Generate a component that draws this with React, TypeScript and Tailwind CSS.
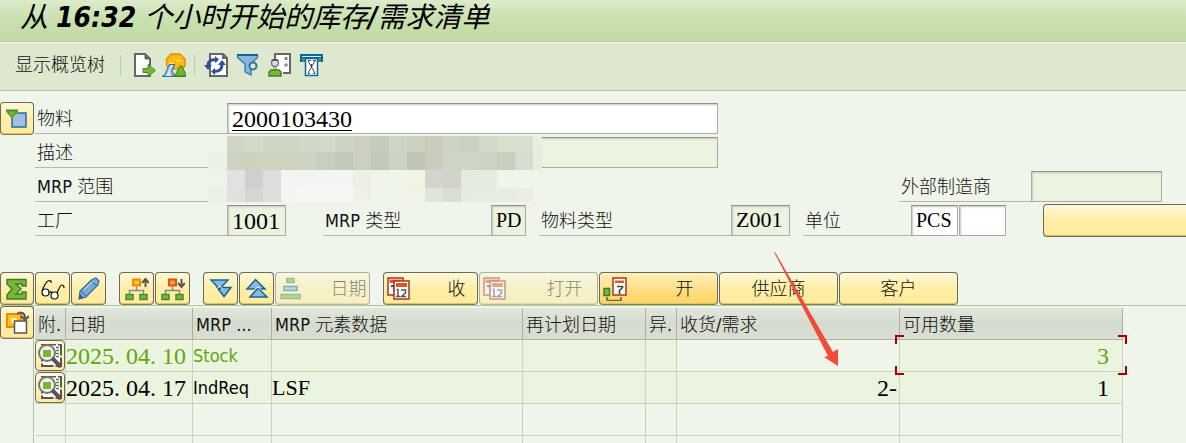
import type { ReactNode } from "react";

const SANS = "font-['DejaVu_Sans_Condensed','Noto_Sans_CJK_SC',sans-serif]";
const SERIF = "font-['Liberation_Serif','Noto_Sans_CJK_SC',serif]";

type IconProps = { children: ReactNode };

function Icon({ children }: IconProps) {
  return (
    <svg viewBox="0 0 24 24" className="size-6 shrink-0" aria-hidden="true">
      {children}
    </svg>
  );
}

const ExportPage = () => (
  <Icon>
    <path d="M2 1H12l5 5v17H2z" fill="#fff" stroke="#666" strokeWidth="2" />
    <path d="M12 1v5h5z" fill="#666" stroke="#666" />
    <path d="M10 15.500h5v-4l7.500 6L15 23.500v-4h-5z" fill="#7cb82f" stroke="#3f8a2c" />
  </Icon>
);

const Landscape = () => (
  <Icon>
    <path d="M4.500 12V6l4.500-5h9l5 5v7l-3 3H8z" fill="#fdbb12" stroke="#f08a00" strokeWidth="1.500" />
    <path d="M6 12c1-2 4-3 6-1M14 8c1-1 4-1 6 1" fill="none" stroke="#fff2b0" />
    <path d="M0 23.500l3-2 4-10h6l-3 6 3 6z" fill="#8fb4dc" stroke="#2d6da0" />
    <path d="M4 23l5-11h2l-3 6 1 5z" fill="#d8e8f5" />
    <path d="M12 24l6-11h2l4 9v2z" fill="#6fb52c" stroke="#3f7d3c" />
    <path d="M10 22.500h14V24H10z" fill="#3f7d3c" />
  </Icon>
);

const Refresh = () => (
  <Icon>
    <path d="M6 1h13l4 4v18H6z" fill="#fff" stroke="#666" strokeWidth="2" />
    <path d="M18 1v5h5z" fill="#666" />
    <path d="M4 13c0-5 3-7 9-6" fill="none" stroke="#2f4f9f" strokeWidth="3" />
    <path d="M0 12h8l-4 5z" fill="#2f4f9f" />
    <path d="M18 11c0 6-3 8-9 7" fill="none" stroke="#2f4f9f" strokeWidth="3" />
    <path d="M14 12h8l-4-5zM11 3v7l4-3.500zM11 15v7l-4-3.500z" fill="#2f4f9f" />
  </Icon>
);

const Filter = () => (
  <Icon>
    <path d="M1.500 1.500h20v3L15 11v11l-6-3v-8L1.500 4.500z" fill="#8fb4d8" stroke="#1f75a8" strokeWidth="1.200" />
    <path d="M1 1h21v2H1z" fill="#006a9e" />
    <circle cx="17" cy="13" r="3.500" fill="#dfe8d0" stroke="#2b78aa" strokeWidth="2" />
  </Icon>
);

const PersonCard = () => (
  <Icon>
    <path d="M7 1h15v19H7z" fill="#fff" />
    <path d="M7 7V1h15v19h-7" fill="none" stroke="#666" strokeWidth="2" />
    <path d="M17 4.500h2v2h-2zM17 11h2v2h-2z" fill="none" stroke="#666" />
    <circle cx="7" cy="10" r="3.500" fill="#ddd" stroke="#777" strokeWidth="1.500" />
    <path d="M3 8c1-3 7-3 8 0z" fill="#555" />
    <path d="M5 14h4v4H5z" fill="#bbb" />
    <path d="M1 23v-4l2-2h8l2 2v4z" fill="#7cb82f" stroke="#3f7d3c" strokeWidth="1.500" />
  </Icon>
);

const Hourglass = () => (
  <Icon>
    <path d="M0 1h23v8H0z" fill="#006a9e" />
    <path d="M2 3h19v1H2z" fill="#dfeaf2" />
    <path d="M2 5h4v4H2zM17 5h4v4h-4z" fill="#777" />
    <path d="M5.500 5.500h12v17h-12z" fill="#fff" stroke="#006a9e" strokeWidth="1.500" />
    <path d="M8 8l7 12M15 8L8 20M8 7.500h3M13 7.500h3M8 20.500h2M13 20.500h2M11.500 11v4" stroke="#333" strokeWidth="0.900" fill="none" />
  </Icon>
);

const HeaderToggle = () => (
  <Icon>
    <path d="M7 6h14v14H7z" fill="#a3bfdd" stroke="#1a6fa3" strokeWidth="1.500" />
    <path d="M1 3h12v2l-5 6H6L1 5z" fill="#7cb82f" />
    <path d="M1 2.500h12v2H1z" fill="#3f8a3c" />
    <path d="M3 5l4 5 4-5" fill="none" stroke="#3f8a3c" />
  </Icon>
);

const Sigma = () => (
  <Icon>
    <path d="M2 2.500h19V9h-4V7h-6l5 5-5 5h6v-2h4v7H2v-4l5-6-5-5z" fill="#7cb82f" stroke="#3a7d3a" strokeWidth="1.500" />
  </Icon>
);

const Glasses = () => (
  <Icon>
    <g fill="none" stroke="#111" strokeWidth="1.200">
      <circle cx="4.500" cy="15.500" r="3.500" fill="#fff" />
      <circle cx="13.500" cy="18.500" r="3.500" fill="#fff" />
      <path d="M8 16c1-2 3-1 3 0M1 14C3 9 5 5 7 4s4 0 3 2M16 16c2-4 3-8 5-8s2 1 2 3" />
    </g>
  </Icon>
);

const Pencil = () => (
  <Icon>
    <path d="M2 22l1-8L15 2.500l4-1.500 3 3-1 4L9 20z" fill="#7aa9d8" stroke="#2f6f9f" strokeWidth="1.200" />
    <path d="M14 4l6 5M4 14l5 5" stroke="#2f6f9f" fill="none" />
    <path d="M7 13L16 4" stroke="#d5e5f4" fill="none" />
    <path d="M2 22l1-5 4 4z" fill="#2f5f8f" />
  </Icon>
);

const Tree = ({ down = false }: { down?: boolean }) => (
  <Icon>
    <path d="M8 2.500h7v6H8z" fill={down ? "#fa9f2a" : "#fdc22b"} stroke={down ? "#d9531e" : "#f08a00"} strokeWidth="2" />
    <path d="M11.500 9.500V13M4.500 17v-3.500h14V17" fill="none" stroke="#888" strokeWidth="1.500" />
    <path d="M1 17.500h7v5H1zM15 17.500h7v5h-7z" fill="#7cb82f" stroke="#3f8a3c" strokeWidth="1.500" />
    {down ? (
      <path d="M20.500 2v7M17 6l3.500 4L24 6" fill="none" stroke="#555" strokeWidth="2" />
    ) : (
      <path d="M20.500 10V3M17 6l3.500-4L24 6" fill="none" stroke="#555" strokeWidth="2" />
    )}
  </Icon>
);

const DoubleDown = () => (
  <Icon>
    <path d="M8 10.500h14l-7 9z" fill="#8fb8e0" stroke="#0f679c" strokeWidth="1.500" />
    <path d="M2 3h17l-8.500 9z" fill="#8fb8e0" stroke="#0f679c" strokeWidth="1.500" />
    <path d="M7 12l4-3 3 3" stroke="#fff" fill="none" />
  </Icon>
);

const DoubleUp = () => (
  <Icon>
    <path d="M2 12l8.500-9.500L20 12z" fill="#8fb8e0" stroke="#0f679c" strokeWidth="1.500" />
    <path d="M5 20l8-9 9 9z" fill="#8fb8e0" stroke="#0f679c" strokeWidth="1.500" />
    <path d="M9 13l4-3 3 3" stroke="#fff" fill="none" />
  </Icon>
);

const Stack = () => (
  <Icon>
    <path d="M8 1.500h7v4H8zM2 17.500h19v4H2z" fill="#7cb82f" stroke="#3f8a3c" strokeWidth="1.500" />
    <path d="M5 9.500h13v4H5z" fill="#8fb8e0" stroke="#0f679c" strokeWidth="1.500" />
  </Icon>
);

const Calendars = () => (
  <Icon>
    <path d="M1 1h15v17H1z" fill="#fff" stroke="#b03020" strokeWidth="1.500" />
    <path d="M2.500 2.500h12V6h-12z" fill="#e0561c" />
    <path d="M4 9h3v6" fill="none" stroke="#444" strokeWidth="2" />
    <path d="M7 4h15v18H7z" fill="#fff" stroke="#b03020" strokeWidth="1.500" />
    <path d="M9 6h11v4H9z" fill="#e0561c" />
    <path d="M9.500 12.500H11V19M9 19.500h4M14 13h4.500v3L14.500 19.500H19" fill="none" stroke="#555" strokeWidth="1.500" />
  </Icon>
);

const CalendarLink = () => (
  <Icon>
    <path d="M10 1h13v17H10z" fill="#fff" stroke="#b03020" strokeWidth="1.500" />
    <path d="M12 3.500h9V6h-9z" fill="#e0561c" />
    <path d="M14 9.500h5.500v1l-3 3V17" fill="none" stroke="#444" strokeWidth="1.700" />
    <path d="M1 11.500h5.500v7H1z" fill="#7cb82f" stroke="#3f7d3c" strokeWidth="1.500" />
    <path d="M4 20v3.500h14V20" fill="none" stroke="#666" strokeWidth="1.700" />
  </Icon>
);

const CopyArrow = () => (
  <Icon>
    <path d="M2 3h14v13H2z" fill="#fdc22b" stroke="#f08a00" strokeWidth="2" />
    <path d="M6.500 7h5v5h-5z" fill="#fff4c0" />
    <path d="M9.500 10h12v12h-12z" fill="#fff" stroke="#555" strokeWidth="1.500" />
    <path d="M12 3c4-3 8-1 8 4M16 5l4 4 4-4" fill="none" stroke="#555" strokeWidth="2" />
  </Icon>
);

const Details = () => (
  <Icon>
    <path d="M4 0.500h19V22H4z" fill="#fff" stroke="#555" strokeWidth="2" strokeDasharray="14 2" />
    <path d="M18 3.500h3M18 6.500h3M18 9.500h3M18 12.500h3" stroke="#3f8a3c" strokeWidth="1.500" />
    <circle cx="9" cy="9" r="8" fill="#eef2ea" stroke="#777" strokeWidth="2" />
    <path d="M5 6h8v7H5z" fill="#7cb82f" />
    <path d="M14 14l9 9" stroke="#555" strokeWidth="4" />
  </Icon>
);

type ButtonProps = {
  label: string;
  icon?: ReactNode;
  text?: string;
  className: string;
  disabled?: boolean;
  active?: boolean;
};

function YellowButton({ label, icon, text, className, disabled, active }: ButtonProps) {
  const fill = active
    ? "bg-linear-to-b from-[#fff0b8] via-[#ffe08a] to-[#ffd55c]"
    : "bg-linear-to-b from-[#fff8d8] via-[#ffeea6] to-[#ffeb9c]";
  return (
    <button
      type="button"
      aria-label={label}
      disabled={disabled}
      className={`flex h-[33px] shrink-0 items-center justify-center rounded-sm border border-[#6a6a5c] border-b-[#8a7c4c] whitespace-nowrap shadow-[inset_0_-1px_0_#d9c272] disabled:opacity-50 ${fill} ${className}`}
    >
      {icon}
      {text && <span className={icon ? "flex-1 pl-7 text-center" : ""}>{text}</span>}
    </button>
  );
}

function Label({ id, className, children }: { id: string; className: string; children: ReactNode }) {
  return (
    <label
      htmlFor={id}
      className={`flex h-[31px] shrink-0 items-center border-b border-[#b2b8ac] pt-0.5 pl-0.5 whitespace-nowrap ${className}`}
    >
      {children}
    </label>
  );
}

function Field({ id, value = "", className, label }: { id: string; value?: string; className: string; label?: string }) {
  return (
    <input
      id={id}
      aria-label={label}
      defaultValue={value}
      className={`h-[31px] shrink-0 border border-[#a9ada5] border-t-[#8f948b] px-1 text-black shadow-[inset_1px_1px_2px_#c4c9be] outline-none ${SERIF} ${className}`}
    />
  );
}

const READONLY = "bg-[#eaf4df]";

const MASK: string[][] = [
  ["", "#cfd6c4", "#d2dac8", "#cdd6c4", "#cfd6c4", "#d0d8c8", "#d2dacb", "#ccd4c2", "#cdd0be", "#c3ccba", "#ced6c6", "#cad2c0", "#c9ccb8", "#cdd4c6", "#c9d0be", "#d0d9ca", "#d8dfca", "#d8dfcf", "#e6eedc"],
  ["#ebf1e7", "#cdd4c1", "#cbd3bf", "#cdd4bf", "#ccd3bf", "#ccd4c4", "#c7cfbf", "#c1c9b9", "#cad0be", "#c2c9b9", "#ccd4c4", "#bfc4b8", "#c8cebb", "#cdd6c5", "#cfd7c4", "#ccd3c3", "#c8cfbd", "#d6dfcf", "#e6eedc"],
  ["#eef3ea", "#e1e1e0", "#cfcfcf", "#dddddd", "#f4f4f2", "#f4f4f3", "#f4f4f3", "#f4f4f3", "#ecf0e6", "", "", "#f0f5e4", "#d1d5cd", "#d1d3ca", "#e5ebe0", "#e4eae0", "", "", ""],
  ["#eaf0e6", "#e0e0df", "#d5d5d3", "#dedddb", "#f3f5f2", "#f6f7f5", "#f6f7f5", "#f6f7f5", "#eef1e7", "", "", "#eff2e8", "#dfe5dc", "#d9ded5", "#e5ebe0", "#e7ece3", "#e7ece3", "#eceee6", ""],
];

/* Pixelated cover over the confidential description and planning area. */
function Mask() {
  return (
    <div className="absolute top-[34px] left-[173px] grid w-[334px] grid-cols-[19px_repeat(17,18px)_9px] grid-rows-[16px_18px_18px_14px]" aria-hidden="true">
      {MASK.flatMap((row, r) => row.map((color, c) => <div key={`${r}-${c}`} style={{ backgroundColor: color }} />))}
    </div>
  );
}

function DateText({ parts }: { parts: [string, string, string] }) {
  return (
    <span className="inline-flex gap-1.5">
      <span>{parts[0]}.</span>
      <span>{parts[1]}.</span>
      <span>{parts[2]}</span>
    </span>
  );
}

const COLUMNS = [
  { title: "附.", width: "w-[31px]" },
  { title: "日期", width: "w-[127px]" },
  { title: "MRP ...", width: "w-[79px]" },
  { title: "MRP 元素数据", width: "w-[251px]" },
  { title: "再计划日期", width: "w-[123px]" },
  { title: "异.", width: "w-[31px]" },
  { title: "收货/需求", width: "w-[223px]" },
  { title: "可用数量", width: "w-[223px]" },
];

const CELL = "h-8 border-r border-b border-[#c9d3bd] p-0 whitespace-nowrap";
const FILLED = "bg-[#eaf4df]";

function DetailButton() {
  return (
    <button type="button" aria-label="详细信息" className="flex h-[31px] w-[30px] items-center justify-center rounded-sm border border-[#6a6a5c] bg-linear-to-b from-[#fff8d8] to-[#ffeb9c]">
      <Details />
    </button>
  );
}

export default function App() {
  return (
    <div className={`flex h-screen flex-col overflow-hidden bg-[#eff5ea] text-lg font-light text-[#111] ${SANS}`}>
      <header className="flex h-[42px] shrink-0 items-start border-b border-[#b4c8a2] bg-linear-to-b from-[#dcebc9] via-[#c8dfae] to-[#c2d9a8] pl-5">
        <h1 className="text-[28px] leading-[36px] font-normal whitespace-nowrap text-black italic">
          从 <b className="font-bold">16:32</b> 个小时开始的库存<b className="font-bold">/</b>需求清单
        </h1>
      </header>

      <nav className="flex h-[49px] shrink-0 items-center border-t border-b border-t-[#f2f8ec] border-b-[#b4c4a8] bg-[#dde8cf] pb-[3px] pl-[15px]">
        <button type="button" className="whitespace-nowrap">显示概览树</button>
        <span className="ml-[15px] h-5 w-px bg-[#b5d09a]" />
        <button type="button" aria-label="转到" className="ml-3"><ExportPage /></button>
        <button type="button" aria-label="环境" className="ml-[5px]"><Landscape /></button>
        <span className="ml-2 h-5 w-px bg-[#b5d09a]" />
        <span className="ml-[9px] flex gap-2">
          <button type="button" aria-label="刷新"><Refresh /></button>
          <button type="button" aria-label="过滤器"><Filter /></button>
          <button type="button" aria-label="用户设置"><PersonCard /></button>
          <button type="button" aria-label="期间总计"><Hourglass /></button>
        </span>
      </nav>

      <form className="flex shrink-0 gap-px pt-[11px]">
        <YellowButton label="标题" icon={<HeaderToggle />} className="w-[34px]" />
        <div className="relative flex flex-1 flex-col gap-[3px] pt-px">
          <div className="flex">
            <Label id="material" className="w-48">物料</Label>
            <Field id="material" value="2000103430" className="w-[491px] bg-white text-2xl underline decoration-1 underline-offset-3" />
          </div>
          <div className="flex">
            <Label id="description" className="w-48">描述</Label>
            <Field id="description" className={`w-[491px] ${READONLY}`} />
          </div>
          <div className="flex">
            <span className="flex h-[31px] w-48 shrink-0 items-center border-b border-[#b2b8ac] pt-0.5 pl-0.5 whitespace-nowrap">MRP 范围</span>
            <Label id="maker" className="ml-[672px] w-[132px]">外部制造商</Label>
            <Field id="maker" className={`w-[131px] ${READONLY}`} />
          </div>
          <div className="flex">
            <Label id="plant" className="w-48">工厂</Label>
            <Field id="plant" value="1001" className={`w-[59px] text-2xl ${READONLY}`} />
            <Label id="mrp-type" className="ml-[37px] w-[168px]">MRP 类型</Label>
            <Field id="mrp-type" value="PD" className={`w-[35px] text-xl ${READONLY}`} />
            <Label id="material-type" className="ml-[13px] w-48">物料类型</Label>
            <Field id="material-type" value="Z001" className={`w-[59px] text-[22px] ${READONLY}`} />
            <Label id="unit" className="ml-[13px] w-[108px]">单位</Label>
            <Field id="unit" value="PCS" className="w-[47px] bg-white text-xl" />
            <Field id="unit-alt" label="替代单位" className="ml-px w-[47px] bg-white text-xl" />
            <button type="button" aria-label="更多" className="-my-px ml-[37px] h-[33px] flex-1 rounded-l-sm border border-r-0 border-[#6a6a5c] bg-linear-to-b from-[#fff8d8] via-[#ffeea6] to-[#ffeb9c] shadow-[inset_0_-1px_0_#d9c272]" />
          </div>
          <Mask />
        </div>
      </form>

      <div className="mt-9 flex shrink-0 gap-[13px] border-b border-[#adcb94]">
        <div className="flex gap-px">
          <YellowButton label="总计" icon={<Sigma />} className="w-[34px]" />
          <YellowButton label="显示" icon={<Glasses />} className="w-[35px]" />
          <YellowButton label="更改" icon={<Pencil />} className="w-[35px]" />
        </div>
        <div className="flex gap-px">
          <YellowButton label="向上展开" icon={<Tree />} className="w-[35px]" />
          <YellowButton label="向下展开" icon={<Tree down />} className="w-[35px]" />
        </div>
        <div className="flex gap-px">
          <YellowButton label="全部展开" icon={<DoubleDown />} className="w-[35px]" />
          <YellowButton label="全部折叠" icon={<DoubleUp />} className="w-[35px]" />
          <YellowButton label="日期" icon={<Stack />} text="日期" disabled className="w-[95px] px-[3px]" />
        </div>
        <div className="flex gap-px">
          <YellowButton label="收" icon={<Calendars />} text="收" className="w-[95px] px-[3px]" />
          <YellowButton label="打开" icon={<Calendars />} text="打开" disabled className="w-[119px] px-[3px]" />
          <YellowButton label="开" icon={<CalendarLink />} text="开" active className="w-[119px] px-[3px]" />
          <YellowButton label="供应商" text="供应商" className="w-[119px]" />
          <YellowButton label="客户" text="客户" className="w-[119px]" />
        </div>
      </div>

      <main className="relative flex min-h-0 flex-1 gap-px">
        <aside className="w-[34px] shrink-0 border-r border-[#adcb94]">
          <YellowButton label="选择布局" icon={<CopyArrow />} className="w-[34px]" />
        </aside>
        <div className="pt-0.5">
          <table className="w-[1088px] table-fixed border-separate border-spacing-0 text-left">
            <thead>
              <tr>
                {COLUMNS.map((column) => (
                  <th
                    key={column.title}
                    scope="col"
                    className={`h-8 border-r border-b border-[#a9b49f] bg-linear-to-b from-[#e2e7dd] via-[#d5dbce] to-[#d8dfd2] pt-0.5 pr-0 pb-0 pl-[3px] leading-6 font-light whitespace-nowrap ${column.width}`}
                  >
                    {column.title}
                  </th>
                ))}
              </tr>
            </thead>
            <tbody className="text-black">
              <tr className="text-[#65a60c]">
                <td className={`${CELL} ${FILLED}`}><DetailButton /></td>
                <td className={`${CELL} ${FILLED} ${SERIF} text-2xl leading-6`}><DateText parts={["2025", "04", "10"]} /></td>
                <td className={`${CELL} ${FILLED}`}>Stock</td>
                <td className={`${CELL} ${FILLED}`} />
                <td className={`${CELL} ${FILLED}`} />
                <td className={`${CELL} ${FILLED}`} />
                <td className={CELL} />
                <td className={`${CELL} ${FILLED} ${SERIF} relative pr-[13px] text-right text-2xl leading-6`}>
                  3
                  <span className="absolute -top-[5px] -left-[5px] size-[9px] border-t-2 border-l-2 border-[#a80000]" />
                  <span className="absolute -top-[5px] -right-[5px] size-[9px] border-t-2 border-r-2 border-[#a80000]" />
                  <span className="absolute -bottom-[4px] -left-[5px] size-[9px] border-b-2 border-l-2 border-[#a80000]" />
                  <span className="absolute -right-[5px] -bottom-[4px] size-[9px] border-r-2 border-b-2 border-[#a80000]" />
                </td>
              </tr>
              <tr>
                <td className={`${CELL} ${FILLED}`}><DetailButton /></td>
                <td className={`${CELL} ${FILLED} ${SERIF} text-2xl leading-6`}><DateText parts={["2025", "04", "17"]} /></td>
                <td className={`${CELL} ${FILLED}`}>IndReq</td>
                <td className={`${CELL} ${FILLED} ${SERIF} text-[22px] leading-6`}>LSF</td>
                <td className={`${CELL} ${FILLED}`} />
                <td className={`${CELL} ${FILLED}`} />
                <td className={`${CELL} ${FILLED} ${SERIF} pr-0.5 text-right text-2xl leading-6`}>2-</td>
                <td className={`${CELL} ${FILLED} ${SERIF} pr-[13px] text-right text-2xl leading-6`}>1</td>
              </tr>
              {[0, 1].map((row) => (
                <tr key={row}>
                  {COLUMNS.map((column) => (
                    <td key={column.title} className={CELL} />
                  ))}
                </tr>
              ))}
            </tbody>
          </table>
        </div>
        <svg viewBox="0 0 66 116" className="pointer-events-none absolute -top-[54px] left-[773px] h-[116px] w-[66px]" aria-hidden="true">
          <path d="M1 0l1 0L60 100l5-3v17L51 105l4-1z" fill="#f24a3d" />
        </svg>
      </main>
    </div>
  );
}
